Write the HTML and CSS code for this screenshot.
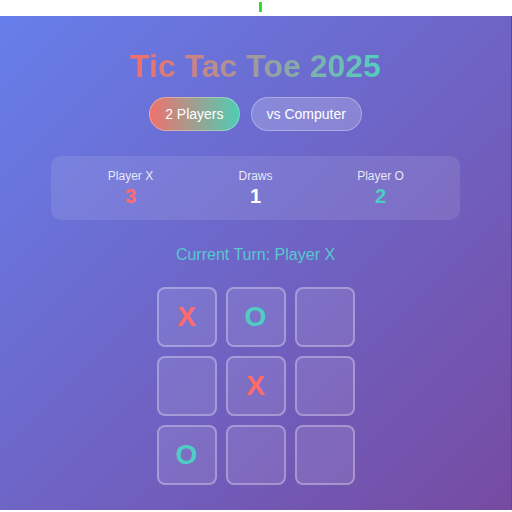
FILE: index.html
```html
<!DOCTYPE html>
<html>
<head>
<meta charset="utf-8">
<link rel="stylesheet" href="styles.css">
</head>
<body>
<div class="topbar"><span class="marker"></span></div>
<main class="app">
  <h1 class="title">Tic Tac Toe 2025</h1>
  <div class="modes">
    <button class="mode active">2 Players</button>
    <button class="mode">vs Computer</button>
  </div>
  <section class="scores">
    <div class="score"><div class="label">Player X</div><div class="value x">3</div></div>
    <div class="score"><div class="label">Draws</div><div class="value">1</div></div>
    <div class="score"><div class="label">Player O</div><div class="value o">2</div></div>
  </section>
  <div class="turn">Current Turn: Player X</div>
  <div class="board">
    <div class="cell x">X</div>
    <div class="cell o">O</div>
    <div class="cell"></div>
    <div class="cell"></div>
    <div class="cell x">X</div>
    <div class="cell"></div>
    <div class="cell o">O</div>
    <div class="cell"></div>
    <div class="cell"></div>
  </div>
</main>
</body>
</html>
```

FILE: styles.css
```css
html, body {
  margin: 0;
  padding: 0;
  background: #fff;
  font-family: "Liberation Sans", Arial, sans-serif;
}
.topbar {
  height: 16px;
  position: relative;
}
.marker {
  position: absolute;
  left: 259px;
  top: 2px;
  width: 3px;
  height: 10px;
  background: #2fdc2f;
}
.app {
  width: 512px;
  height: 494px;
  box-sizing: border-box;
  padding-top: 32px;
  background: linear-gradient(135deg, #667eea 0%, #764ba2 100%);
  display: flex;
  flex-direction: column;
  align-items: center;
  color: #fff;
  border-right: 1px solid #5a4a90;
}
.title {
  margin: 0;
  font-size: 32px;
  line-height: 36px;
  font-weight: bold;
  background: linear-gradient(90deg, #f46e68, #a09a9e 50%, #52cfbe);
  -webkit-background-clip: text;
  background-clip: text;
  color: transparent;
}
.modes {
  display: flex;
  gap: 11px;
  margin-top: 13px;
}
.mode {
  height: 34px;
  padding: 0 15px;
  border-radius: 17px;
  border: 1px solid rgba(255,255,255,0.3);
  background: rgba(255,255,255,0.2);
  color: #fff;
  font-family: inherit;
  font-size: 14px;
}
.mode.active {
  background: linear-gradient(90deg, #f0716d, #4fcdb4);
}
.scores {
  margin-top: 25px;
  width: 409px;
  height: 64px;
  box-sizing: border-box;
  padding: 0 17px;
  border-radius: 10px;
  background: rgba(255,255,255,0.1);
  display: grid;
  grid-template-columns: 1fr 1fr 1fr;
  align-content: center;
  text-align: center;
}
.label {
  font-size: 12px;
  line-height: 14px;
  color: rgba(255,255,255,0.85);
}
.value {
  font-size: 20px;
  line-height: 24px;
  font-weight: bold;
  margin-top: 1px;
}
.value.x { color: #ff6b6b; }
.value.o { color: #4ecdc4; }
.turn {
  margin-top: 26px;
  font-size: 16px;
  line-height: 18px;
  color: #58c8d0;
}
.board {
  margin-top: 23px;
  display: grid;
  grid-template-columns: repeat(3, 60px);
  grid-auto-rows: 60px;
  gap: 9px;
}
.cell {
  box-sizing: border-box;
  border: 2px solid rgba(255,255,255,0.3);
  border-radius: 8px;
  background: rgba(255,255,255,0.1);
  display: flex;
  align-items: center;
  justify-content: center;
  font-size: 28px;
  font-weight: bold;
}
.cell.x { color: #ff6b6b; }
.cell.o { color: #4ecdc4; }
```
